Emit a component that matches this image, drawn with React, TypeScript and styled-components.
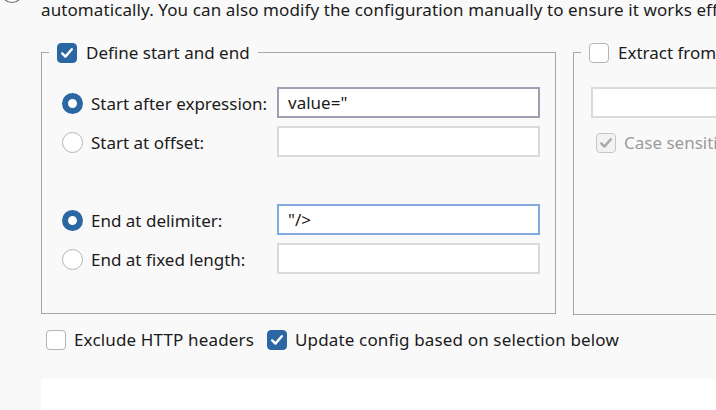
import React from "react";
import styled, { createGlobalStyle } from "styled-components";

const Global = createGlobalStyle`
  html, body { margin: 0; padding: 0; }
  body {
    background: #f9f9f9;
    font-family: "Noto Sans", "Open Sans", sans-serif;
    font-size: 17px;
    color: #1b1b1b;
    width: 716px;
    height: 410px;
    overflow: hidden;
  }
  * { box-sizing: border-box; }
`;

const Page = styled.div`
  display: flex;
  flex-direction: column;
  height: 410px;
`;

const Header = styled.div`
  display: flex;
  align-items: flex-start;
  gap: 17px;
  height: 20px;
`;

const InfoIcon = styled.svg`
  margin-top: -20px;
  flex-shrink: 0;
`;

const HeaderText = styled.p`
  margin: 0;
  line-height: 20px;
  white-space: nowrap;
  letter-spacing: 0.1px;
`;

const Main = styled.div`
  display: flex;
  gap: 17px;
  margin-top: 22px;
  padding-left: 41px;
  align-items: flex-start;
`;

const Group = styled.fieldset<{ $width: number }>`
  margin: 0;
  padding: 0;
  border: 1px solid #a6a6a6;
  width: ${(p) => p.$width}px;
  flex-shrink: 0;
  min-width: 0;
`;

const Legend = styled.legend`
  display: flex;
  align-items: center;
  gap: 9px;
  margin-left: 7px;
  padding: 0 8px 0 8px;
  height: 21px;
  line-height: 21px;
  white-space: nowrap;
`;

const Box = styled.span<{ $checked?: boolean; $disabled?: boolean }>`
  display: inline-flex;
  align-items: center;
  justify-content: center;
  width: 20px;
  height: 20px;
  border-radius: 4px;
  flex-shrink: 0;
  background: ${(p) => (p.$disabled ? "#f2f2f2" : p.$checked ? "#2b67a3" : "#ffffff")};
  border: 1px solid ${(p) => (p.$disabled ? "#c6c6c6" : p.$checked ? "#2b67a3" : "#b4b4b4")};
`;

const Body = styled.div`
  display: flex;
  flex-direction: column;
  gap: 47px;
  padding: 24px 15px 39px 20px;
`;

const RowGrid = styled.div`
  display: grid;
  grid-template-columns: 215px 263px;
  row-gap: 8px;
`;

const RadioLabel = styled.label`
  display: flex;
  align-items: center;
  gap: 8px;
  padding-top: 1px;
  white-space: nowrap;
  line-height: 23px;
`;

const Radio = styled.span<{ $on?: boolean }>`
  width: 21px;
  height: 21px;
  border-radius: 50%;
  flex-shrink: 0;
  background: #ffffff;
  border: ${(p) => (p.$on ? "6px solid #2b67a3" : "1px solid #b4b4b4")};
`;

const Field = styled.div<{ $tone?: "strong" | "focus" }>`
  height: 31px;
  background: #ffffff;
  border: ${(p) =>
    p.$tone === "strong" ? "2px solid #a09eb2" : p.$tone === "focus" ? "2px solid #82aadf" : "2px solid #dadada"};
  padding: 0 9px;
  display: flex;
  align-items: center;
  white-space: nowrap;
  line-height: 23px;
`;

const RightBody = styled.div`
  display: flex;
  flex-direction: column;
  gap: 13px;
  padding: 24px 0 0 17px;
  height: 251px;
`;

const WideField = styled(Field)`
  width: 230px;
`;

const CheckRow = styled.label<{ $muted?: boolean }>`
  display: flex;
  align-items: center;
  gap: 8px;
  white-space: nowrap;
  line-height: 23px;
  color: ${(p) => (p.$muted ? "#9b9b9b" : "inherit")};
`;

const Indented = styled(CheckRow)`
  padding-left: 5px;
`;

const Options = styled.div`
  display: flex;
  align-items: center;
  gap: 13px;
  padding: 13px 0 0 46px;
  letter-spacing: 0.15px;
`;

const Preview = styled.div`
  margin: 28px 0 0 41px;
  flex: 1;
  background: #ffffff;
`;

const Check = ({ color = "#ffffff" }: { color?: string }) => (
  <svg width="14" height="14" viewBox="0 0 14 14">
    <path d="M2.2 7.4 L5.4 10.6 L11.8 3.2" fill="none" stroke={color} strokeWidth="2.4" strokeLinecap="round" strokeLinejoin="round" />
  </svg>
);

export default function App() {
  return (
    <>
      <Global />
      <Page>
        <Header>
          <InfoIcon width="24" height="24" viewBox="0 0 24 24">
            <circle cx="12" cy="12" r="10.5" fill="none" stroke="#6a6a6a" strokeWidth="1.2" />
          </InfoIcon>
          <HeaderText>
            automatically. You can also modify the configuration manually to ensure it works effectively.
          </HeaderText>
        </Header>
        <Main>
          <Group $width={515}>
            <Legend>
              <Box $checked>
                <Check />
              </Box>
              Define start and end
            </Legend>
            <Body>
              <RowGrid>
                <RadioLabel>
                  <Radio $on />
                  Start after expression:
                </RadioLabel>
                <Field $tone="strong">value="</Field>
                <RadioLabel>
                  <Radio />
                  Start at offset:
                </RadioLabel>
                <Field />
              </RowGrid>
              <RowGrid>
                <RadioLabel>
                  <Radio $on />
                  End at delimiter:
                </RadioLabel>
                <Field $tone="focus">"/&gt;</Field>
                <RadioLabel>
                  <Radio />
                  End at fixed length:
                </RadioLabel>
                <Field />
              </RowGrid>
            </Body>
          </Group>
          <Group $width={260}>
            <Legend>
              <Box />
              Extract from regex group
            </Legend>
            <RightBody>
              <WideField />
              <Indented $muted>
                <Box $checked $disabled>
                  <Check color="#a8a8a8" />
                </Box>
                Case sensitive
              </Indented>
            </RightBody>
          </Group>
        </Main>
        <Options>
          <CheckRow>
            <Box />
            Exclude HTTP headers
          </CheckRow>
          <CheckRow>
            <Box $checked>
              <Check />
            </Box>
            Update config based on selection below
          </CheckRow>
        </Options>
        <Preview />
      </Page>
    </>
  );
}
